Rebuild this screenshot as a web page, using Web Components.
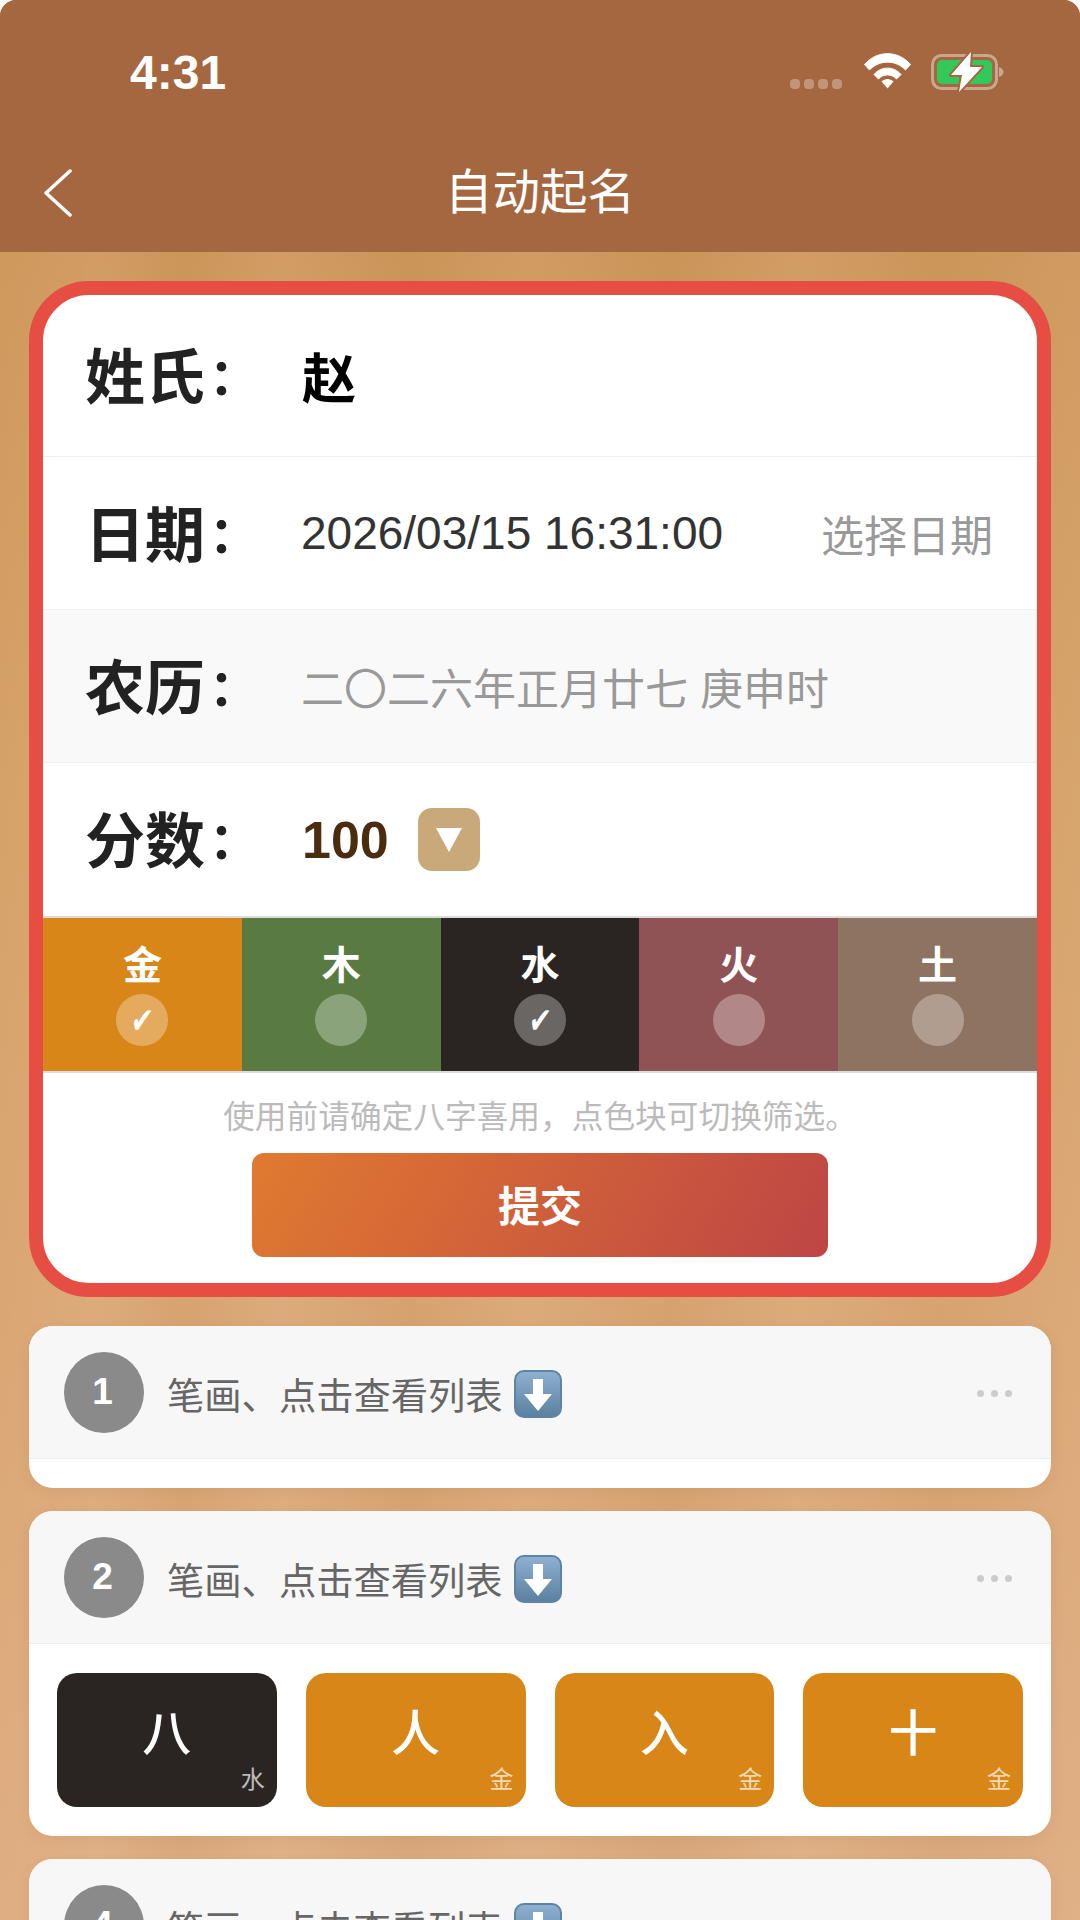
<!DOCTYPE html>
<html lang="zh">
<head>
<meta charset="utf-8">
<title>自动起名</title>
<style>
  html, body { margin: 0; height: 1920px; overflow: hidden; background: #fff; }
  body { font-family: "Liberation Sans", "Noto Sans CJK SC", sans-serif; }
</style>
</head>
<body>
<naming-app>
  <status-bar slot="top"></status-bar>
  <nav-bar slot="top">自动起名</nav-bar>

  <form-card>
    <form-row label="姓氏" first><span class="surname">赵</span></form-row>
    <form-row label="日期"><date-value>2026/03/15 16:31:00</date-value></form-row>
    <form-row label="农历" shaded><date-value muted>二〇二六年正月廿七 庚申时</date-value></form-row>
    <form-row label="分数"><score-picker>100</score-picker></form-row>
    <element-strip>
      <element-swatch color="#d98618" checked>金</element-swatch>
      <element-swatch color="#597b41">木</element-swatch>
      <element-swatch color="#2a2522" checked>水</element-swatch>
      <element-swatch color="#905355">火</element-swatch>
      <element-swatch color="#8e7361">土</element-swatch>
    </element-strip>
    <submit-area hint="使用前请确定八字喜用，点色块可切换筛选。">提交</submit-area>
  </form-card>

  <stroke-card num="1" empty></stroke-card>
  <stroke-card num="2">
    <char-cell color="#2a2522" element="水">八</char-cell>
    <char-cell color="#d98618" element="金">人</char-cell>
    <char-cell color="#d98618" element="金">入</char-cell>
    <char-cell color="#d98618" element="金">十</char-cell>
  </stroke-card>
  <stroke-card num="4"></stroke-card>
</naming-app>

<script>
const CJK = '"Liberation Sans", "Noto Sans CJK SC", sans-serif';

class NamingApp extends HTMLElement {
  constructor() {
    super();
    this.attachShadow({ mode: 'open' }).innerHTML = `
      <style>
        :host {
          display: flex;
          flex-direction: column;
          height: 1920px;
          overflow: hidden;
          border-radius: 16px 16px 0 0;
          font-family: ${CJK};
          background:
            linear-gradient(90deg, rgba(255,255,255,0) 0, rgba(255,255,255,.05) 9%, rgba(120,70,20,.04) 17%, rgba(255,255,255,.05) 26%, rgba(120,70,20,.05) 38%, rgba(255,255,255,.04) 49%, rgba(120,70,20,.05) 62%, rgba(255,255,255,.05) 74%, rgba(120,70,20,.04) 87%, rgba(255,255,255,.03) 100%),
            linear-gradient(180deg, #cf985c 252px, #d6a269 800px, #dba674 1300px, #dfae82 1920px);
        }
        .top { flex: none; background: #a5673f; }
        .content { padding: 29px 29px 0; }
      </style>
      <div class="top"><slot name="top"></slot></div>
      <div class="content"><slot></slot></div>
    `;
  }
}

class StatusBar extends HTMLElement {
  constructor() {
    super();
    this.attachShadow({ mode: 'open' }).innerHTML = `
      <style>
        :host {
          display: flex;
          align-items: center;
          height: 144px;
          padding: 0 73px 0 130px;
          color: #fff;
        }
        .time { font: bold 48px "Liberation Sans", sans-serif; flex: 1; }
        .dots { display: flex; gap: 4px; margin: 24px 22px 0 0; }
        .dots i { width: 10px; height: 10px; border-radius: 4px; background: rgba(255,255,255,.3); }
        svg { display: block; }
        .wifi { margin: -2px 20px 0 0; }
      </style>
      <span class="time">4:31</span>
      <span class="dots"><i></i><i></i><i></i><i></i></span>
      <svg class="wifi" width="47" height="36" viewBox="0 0 47 36">
        <path d="M0.500 11.500C13 -3 34 -3 46.500 11.500L41.500 17C32 6.500 15 6.500 5.500 17Z" fill="#fff" stroke="#fff" stroke-linejoin="round"/>
        <path d="M10 21.500C17 13 30 13 37 21.500L32.500 26C27.500 20.500 19.500 20.500 14.500 26Z" fill="#fff" stroke="#fff" stroke-linejoin="round"/>
        <path d="M17.500 28.500C21 25 26 25 29.500 28.500L23.500 35.500Z" fill="#fff"/>
      </svg>
      <svg width="76" height="42" viewBox="0 0 76 42">
        <rect x="1.500" y="4.500" width="64" height="33" rx="9" fill="none" stroke="rgba(255,255,255,.42)" stroke-width="3"/>
        <path d="M68 16C71 17 72.500 19 72.500 21S71 25 68 26Z" fill="rgba(255,255,255,.42)"/>
        <rect x="6" y="9" width="55" height="24" rx="5" fill="#34c759"/>
        <path d="M40 1L20 24H31L28 41L51 16H39Z" fill="#fff" stroke="#a5673f" stroke-width="4" stroke-linejoin="round" paint-order="stroke"/>
      </svg>
    `;
  }
}

class NavBar extends HTMLElement {
  constructor() {
    super();
    this.attachShadow({ mode: 'open' }).innerHTML = `
      <style>
        :host {
          display: grid;
          grid-template-columns: 1fr auto 1fr;
          align-items: center;
          height: 108px;
          padding: 0 44px;
          color: #fff;
          font-size: 47.500px;
          box-sizing: border-box;
        }
        .title { position: relative; top: -10px; }
        svg { display: block; position: relative; top: -5px; }
      </style>
      <svg width="28" height="48" viewBox="0 0 28 48">
        <path d="M26 2L2 24L26 46" fill="none" stroke="#fff" stroke-width="3.500" stroke-linecap="round" stroke-linejoin="round"/>
      </svg>
      <span class="title"><slot></slot></span>
    `;
  }
}

class FormCard extends HTMLElement {
  constructor() {
    super();
    this.attachShadow({ mode: 'open' }).innerHTML = `
      <style>
        :host {
          display: block;
          border: 14px solid #e74e43;
          border-radius: 60px;
          background: #fff;
          overflow: hidden;
          margin-bottom: 29px;
        }
      </style>
      <slot></slot>
    `;
  }
}

class FormRow extends HTMLElement {
  constructor() {
    super();
    const label = this.getAttribute('label');
    this.attachShadow({ mode: 'open' }).innerHTML = `
      <style>
        :host {
          display: flex;
          align-items: center;
          height: 153px;
          box-sizing: border-box;
          padding-left: 42px;
          border-bottom: 1px solid #f0f0f0;
          font-size: 43px;
        }
        :host([first]) { height: 162px; }
        :host([shaded]) { background: #f9f9f9; }
        :host(:last-of-type) { border-bottom: 0; }
        .label {
          width: 216px;
          flex: none;
          margin-bottom: 6px;
          font: bold 60px "Noto Sans CJK SC", sans-serif;
          color: #222;
          white-space: nowrap;
        }
        .colon {
          font-family: "Noto Sans CJK TC", sans-serif;
          font-size: 50px;
          margin-left: 4px;
          position: relative;
          top: -4px;
        }
        ::slotted(.surname) { font: bold 54px "Noto Sans CJK SC", sans-serif; color: #000; margin-left: 1px; }
        ::slotted(score-picker) { margin-left: 1px; }
      </style>
      <span class="label">${label}<span class="colon">：</span></span>
      <slot></slot>
    `;
  }
}

class DateValue extends HTMLElement {
  constructor() {
    super();
    this.attachShadow({ mode: 'open' }).innerHTML = `
      <style>
        :host {
          flex: 1;
          display: flex;
          align-items: center;
          justify-content: space-between;
          padding-right: 44px;
          font-size: 46px;
          color: #333;
        }
        :host([muted]) { font-size: 43px; color: #999; }
        .pick { font-size: 43px; color: #999; }
      </style>
      <span><slot></slot></span>
      ${this.hasAttribute('muted') ? '' : '<span class="pick">选择日期</span>'}
    `;
  }
}

class ScorePicker extends HTMLElement {
  constructor() {
    super();
    this.attachShadow({ mode: 'open' }).innerHTML = `
      <style>
        :host {
          display: flex;
          align-items: center;
          gap: 29px;
          font: bold 52px "Liberation Sans", sans-serif;
          color: #4a2c0e;
        }
        .drop {
          width: 62px;
          height: 63px;
          border-radius: 14px;
          background: #c9a97a;
          display: grid;
          place-items: center;
        }
        .drop svg { display: block; }
      </style>
      <span><slot></slot></span>
      <span class="drop">
        <svg width="26" height="24" viewBox="0 0 26 24"><path d="M0 0H26L13 24Z" fill="#fff"/></svg>
      </span>
    `;
  }
}

class ElementStrip extends HTMLElement {
  constructor() {
    super();
    this.attachShadow({ mode: 'open' }).innerHTML = `
      <style>
        :host {
          display: grid;
          grid-template-columns: repeat(5, 1fr);
          border-top: 2px solid #dcdcdc;
          border-bottom: 2px solid #dcdcdc;
        }
      </style>
      <slot></slot>
    `;
  }
}

class ElementSwatch extends HTMLElement {
  constructor() {
    super();
    const checked = this.hasAttribute('checked');
    this.attachShadow({ mode: 'open' }).innerHTML = `
      <style>
        :host {
          display: flex;
          flex-direction: column;
          align-items: center;
          height: 153px;
          box-sizing: border-box;
          padding-top: 20px;
          gap: 7px;
          color: #fff;
          background: ${this.getAttribute('color')};
          font: bold 39px "Noto Sans CJK SC", sans-serif;
        }
        .name { line-height: 49px; }
        .dot {
          width: 52px;
          height: 52px;
          border-radius: 50%;
          background: rgba(255,255,255,.3);
          display: grid;
          place-items: center;
          font: bold 36px "DejaVu Sans", sans-serif;
        }
        .dot span { display: block; transform: scaleX(.72) skewX(-8deg); }
      </style>
      <span class="name"><slot></slot></span>
      <span class="dot">${checked ? '<span>✔</span>' : ''}</span>
    `;
  }
}

class SubmitArea extends HTMLElement {
  constructor() {
    super();
    this.attachShadow({ mode: 'open' }).innerHTML = `
      <style>
        :host {
          display: flex;
          flex-direction: column;
          align-items: center;
          padding: 22px 0 26px;
        }
        .hint { font-size: 31.700px; line-height: 44px; color: #bbb; margin-bottom: 14px; }
        button {
          width: 576px;
          height: 104px;
          border: 0;
          border-radius: 12px;
          padding: 0 0 4px;
          color: #fff;
          font: bold 42px "Noto Sans CJK SC", sans-serif;
          background: linear-gradient(120deg, #e07a30, #be4545);
        }
      </style>
      <span class="hint">${this.getAttribute('hint')}</span>
      <button><slot></slot></button>
    `;
  }
}

class StrokeCard extends HTMLElement {
  constructor() {
    super();
    const empty = this.hasAttribute('empty');
    this.attachShadow({ mode: 'open' }).innerHTML = `
      <style>
        :host {
          display: block;
          border-radius: 24px;
          background: #fff;
          overflow: hidden;
          margin-bottom: 23px;
          box-shadow: 0 4px 14px rgba(120,70,20,.08);
        }
        .head {
          display: flex;
          align-items: center;
          height: 133px;
          box-sizing: border-box;
          padding: 0 29px 0 35px;
          background: #f7f7f7;
          border-bottom: 1px solid #eee;
          font-size: 37.300px;
          color: #666;
        }
        .num {
          width: 80px;
          height: 81px;
          box-sizing: border-box;
          padding-right: 3px;
          border-radius: 50%;
          background: #8a8a8a;
          color: #fff;
          font: bold 37px "Liberation Sans", sans-serif;
          display: grid;
          place-items: center;
          margin-right: 23px;
          flex: none;
        }
        .label { margin-top: 3px; }
        .arrow { display: block; margin: 4px 0 0 11px; }
        .more { margin: 3px 10px 0 auto; display: flex; gap: 7px; }
        .more i { width: 7px; height: 7px; border-radius: 50%; background: #ccc; }
        .grid {
          display: grid;
          grid-template-columns: repeat(4, 1fr);
          gap: 29px;
          padding: 29px 28px;
        }
        .grid.empty { padding: 0; height: 29px; }
      </style>
      <div class="head">
        <span class="num">${this.getAttribute('num')}</span>
        <span class="label">笔画、点击查看列表</span>
        <svg class="arrow" width="48" height="48" viewBox="0 0 48 48">
          <defs>
            <linearGradient id="a" x1="0" y1="0" x2="0" y2="1">
              <stop offset="0" stop-color="#8fb2d2"/>
              <stop offset="1" stop-color="#5b7f9f"/>
            </linearGradient>
          </defs>
          <rect x="1" y="1" width="46" height="46" rx="9" fill="url(#a)" stroke="#5d83a5" stroke-width="2"/>
          <path d="M19 9H29V24H38L24 41L10 24H19Z" fill="#fff"/>
        </svg>
        <span class="more"><i></i><i></i><i></i></span>
      </div>
      <div class="grid ${empty ? 'empty' : ''}"><slot></slot></div>
    `;
  }
}

class CharCell extends HTMLElement {
  constructor() {
    super();
    this.attachShadow({ mode: 'open' }).innerHTML = `
      <style>
        :host {
          position: relative;
          display: flex;
          justify-content: center;
          height: 134px;
          border-radius: 20px;
          color: #fff;
          background: ${this.getAttribute('color')};
          font-size: 49px;
          font-weight: 500;
          line-height: 122px;
        }
        .el {
          position: absolute;
          right: 12px;
          bottom: 12px;
          font-size: 24px;
          font-weight: 400;
          line-height: 30px;
          color: rgba(255,255,255,.7);
        }
      </style>
      <span><slot></slot></span>
      <span class="el">${this.getAttribute('element')}</span>
    `;
  }
}

customElements.define('naming-app', NamingApp);
customElements.define('status-bar', StatusBar);
customElements.define('nav-bar', NavBar);
customElements.define('form-card', FormCard);
customElements.define('form-row', FormRow);
customElements.define('date-value', DateValue);
customElements.define('score-picker', ScorePicker);
customElements.define('element-strip', ElementStrip);
customElements.define('element-swatch', ElementSwatch);
customElements.define('submit-area', SubmitArea);
customElements.define('stroke-card', StrokeCard);
customElements.define('char-cell', CharCell);
</script>
</body>
</html>
